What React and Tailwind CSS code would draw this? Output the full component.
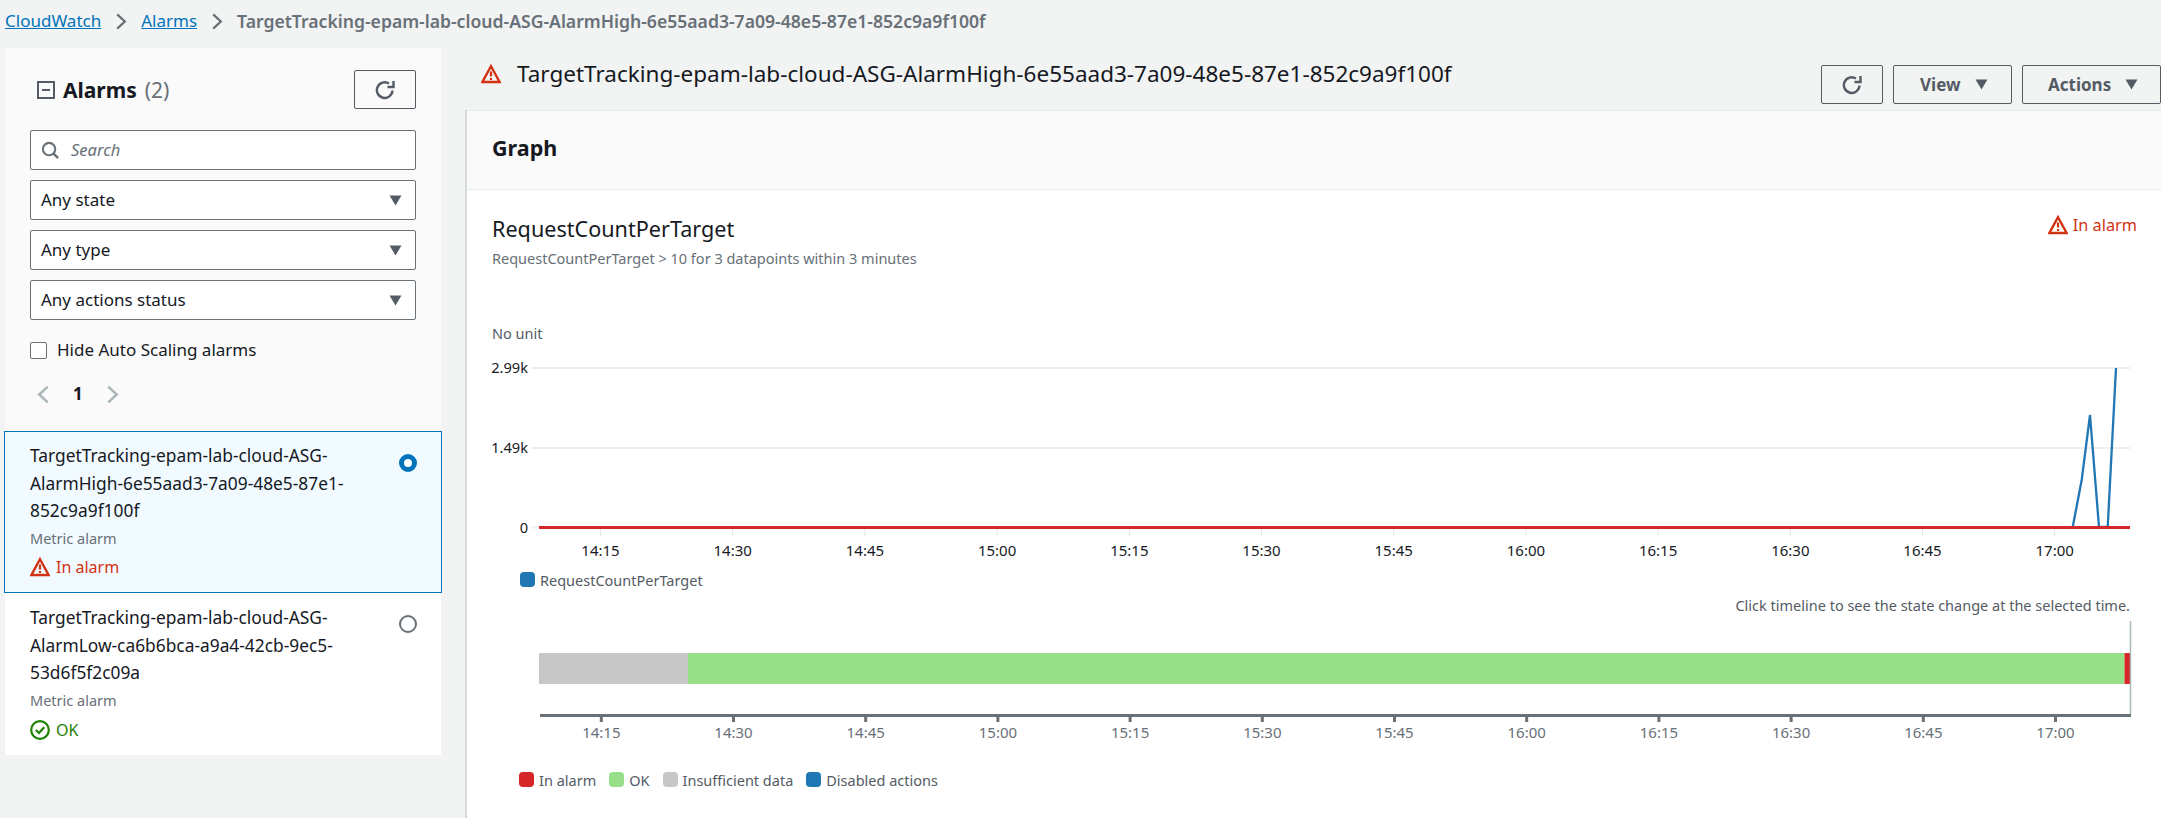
import React from 'react';

const TIMES = ['14:15', '14:30', '14:45', '15:00', '15:15', '15:30', '15:45', '16:00', '16:15', '16:30', '16:45', '17:00'];
const TICK_STEP = 132.2;

const WarnIcon = ({ className }) => (
  <svg viewBox="0 0 20 20" className={className} fill="none">
    <path d="M10 2.2 L18.6 18 H1.4 Z" stroke="#d13212" strokeWidth="2.4" strokeLinejoin="miter" />
    <path d="M10 7.5 V12.5 M10 14 V16" stroke="#d13212" strokeWidth="2.2" />
  </svg>
);

const OkIcon = ({ className }) => (
  <svg viewBox="0 0 20 20" className={className} fill="none">
    <circle cx="10" cy="10" r="8.8" stroke="#1d8102" strokeWidth="2.2" />
    <path d="M5.8 10 L9 13 L14.2 7.2" stroke="#1d8102" strokeWidth="2.2" />
  </svg>
);

const RefreshIcon = () => (
  <svg viewBox="0 0 20 20" className="w-5 h-5" fill="none">
    <path d="M17.5 10.5 A7.8 7.8 0 1 1 14 3.6" stroke="#545b64" strokeWidth="2.4" />
    <path d="M18.5 1 V7 H12.5" stroke="#545b64" strokeWidth="2.4" />
  </svg>
);

const Caret = ({ className }) => (
  <svg viewBox="0 0 14 12" className={className}>
    <path d="M0.5 0.5 H13.5 L7 11.5 Z" fill="#545b64" />
  </svg>
);

const Chevron = ({ dir = 'right', color, className }) => (
  <svg viewBox="0 0 12 18" className={className} fill="none">
    <path d={dir === 'right' ? 'M2 1.5 L10 9 L2 16.5' : 'M10 1.5 L2 9 L10 16.5'} stroke={color} strokeWidth="2.4" />
  </svg>
);

const Dropdown = ({ label }) => (
  <div className="h-10 border border-[#687078] rounded-[2px] bg-white flex items-center justify-between pl-[10px] pr-[13px] text-[17px] text-[#16191f]">
    <span>{label}</span>
    <Caret className="w-[13px] h-[11px]" />
  </div>
);

const AlarmItem = ({ lines, selected, ok }) => (
  <div className={selected
    ? 'h-[162px] -mx-[1px] -mt-[1px] border border-[#0073bb] bg-[#f1faff] pl-[25px] pr-[24px] pt-[10px] flex justify-between'
    : 'h-[162px] bg-white pl-[25px] pr-[24px] pt-[11px] flex justify-between'}
  >
    <div>
      <div className="text-[17.35px] leading-[27.5px] text-[#16191f]">
        {lines.map((l) => <div key={l}>{l}</div>)}
      </div>
      <div className="text-[14.5px] leading-5 mt-[3px] text-[#687078]">Metric alarm</div>
      {ok ? (
        <div className="flex items-center gap-[6px] mt-[10px] text-[16px] leading-5 text-[#1d8102]">
          <OkIcon className="w-5 h-5" />OK
        </div>
      ) : (
        <div className="flex items-center gap-[6px] mt-[9px] text-[16px] leading-5 text-[#d13212]">
          <WarnIcon className="w-5 h-5" />In alarm
        </div>
      )}
    </div>
    {selected ? (
      <div className="w-[18px] h-[18px] rounded-full border-[5px] border-[#0073bb] bg-white mt-[12px]" />
    ) : (
      <div className="w-[18px] h-[18px] rounded-full border-2 border-[#687078] bg-white mt-[11px]" />
    )}
  </div>
);

const Swatch = ({ color, label }) => (
  <div className="flex items-center gap-[5px]">
    <span className="w-[15px] h-[15px] rounded-[4px] -mt-[2px]" style={{ backgroundColor: color }} />
    <span>{label}</span>
  </div>
);

// svg origin is at page x=492
const MetricChart = () => (
  <svg width="1640" height="215" className="block overflow-visible">
    <line x1="40" x2="1638" y1="13" y2="13" stroke="#eeeeee" strokeWidth="2" />
    <line x1="40" x2="1638" y1="93" y2="93" stroke="#eeeeee" strokeWidth="2" />
    <line x1="40" x2="1638" y1="172.5" y2="172.5" stroke="#eeeeee" strokeWidth="2" />
    <g fontFamily="'Noto Sans', sans-serif" fontSize="14.6" fill="#16191f" textAnchor="end">
      <text x="36" y="18">2.99k</text>
      <text x="36" y="98">1.49k</text>
      <text x="36" y="178">0</text>
    </g>
    {TIMES.map((t, i) => (
      <g key={t}>
        <line x1={108.5 + i * TICK_STEP} x2={108.5 + i * TICK_STEP} y1="172" y2="181" stroke="#e5e5e5" />
        <text x={108.5 + i * TICK_STEP} y="201" textAnchor="middle" fontFamily="'Noto Sans', sans-serif" fontSize="15" fill="#16191f">{t}</text>
      </g>
    ))}
    <polyline points="1580.7,172 1589.7,125 1598,60 1607,172 1615.7,172 1624,13" fill="none" stroke="#1f77b4" strokeWidth="2.3" />
    <line x1="47" x2="1638" y1="172.5" y2="172.5" stroke="#d62728" strokeWidth="3" />
  </svg>
);

// same origin, top at page y=620
const Timeline = () => (
  <svg width="1640" height="126" className="block">
    <rect x="47" y="32" width="149" height="31" fill="#c7c7c7" />
    <rect x="196" y="32" width="1436.5" height="31" fill="#98df8a" />
    <rect x="1632.5" y="32" width="5.5" height="31" fill="#d62728" />
    <line x1="1638.5" x2="1638.5" y1="0" y2="94" stroke="#aab7b8" strokeWidth="1.5" />
    <line x1="48" x2="1639" y1="94.5" y2="94.5" stroke="#687078" strokeWidth="3" />
    {TIMES.map((t, i) => (
      <g key={t}>
        <line x1={109.3 + i * TICK_STEP} x2={109.3 + i * TICK_STEP} y1="94" y2="101" stroke="#687078" strokeWidth="3" />
        <text x={109.3 + i * TICK_STEP} y="117" textAnchor="middle" fontFamily="'Noto Sans', sans-serif" fontSize="15" fill="#687078">{t}</text>
      </g>
    ))}
  </svg>
);

const App = () => {
  return (
    <div className="w-[2161px] h-[818px] overflow-hidden bg-[#f2f3f3] font-['Noto_Sans',sans-serif]">
      {/* Breadcrumb */}
      <div className="h-12 flex items-center pl-[5px] pb-[6px] text-[17px]">
        <span className="text-[#0073bb] underline">CloudWatch</span>
        <Chevron color="#687078" className="w-[12px] h-[17px] mx-[14px]" />
        <span className="text-[#0073bb] underline">Alarms</span>
        <Chevron color="#687078" className="w-[12px] h-[17px] mx-[14px]" />
        <span className="font-semibold text-[17.6px] text-[#687078]">TargetTracking-epam-lab-cloud-ASG-AlarmHigh-6e55aad3-7a09-48e5-87e1-852c9a9f100f</span>
      </div>

      <div className="flex">
        {/* Sidebar */}
        <div className="w-[436px] ml-[5px] flex-shrink-0">
          <div className="h-[384px] bg-[#fafafa] pl-[25px] pr-[25px] pt-[22px]">
            <div className="flex justify-between items-start pl-[7px]">
              <div className="flex items-center gap-[8px] mt-[8px]">
                <svg viewBox="0 0 18 18" className="w-[18px] h-[18px]" fill="none">
                  <rect x="1" y="1" width="16" height="16" stroke="#545b64" strokeWidth="2" />
                  <path d="M5 9 H13" stroke="#545b64" strokeWidth="2" />
                </svg>
                <span className="text-[21px] leading-6 font-bold text-[#16191f]">Alarms</span>
                <span className="text-[21px] leading-6 text-[#687078]">(2)</span>
              </div>
              <div className="w-[62px] h-[39px] border border-[#545b64] rounded-[2px] flex items-center justify-center">
                <RefreshIcon />
              </div>
            </div>
            <div className="flex flex-col gap-[10px] mt-[21px]">
              <div className="h-10 border border-[#687078] rounded-[2px] bg-white flex items-center pl-[10px] gap-[11px]">
                <svg viewBox="0 0 20 20" className="w-[19px] h-[19px]" fill="none">
                  <circle cx="8.5" cy="8.5" r="6.5" stroke="#687078" strokeWidth="2.2" />
                  <path d="M13 13 L18 18" stroke="#687078" strokeWidth="2.6" />
                </svg>
                <span className="italic text-[16.5px] text-[#687078]">Search</span>
              </div>
              <Dropdown label="Any state" />
              <Dropdown label="Any type" />
              <Dropdown label="Any actions status" />
            </div>
            <div className="flex items-center gap-[10px] mt-[18px] text-[17px] leading-6 text-[#16191f]">
              <span className="w-[17px] h-[17px] border border-[#687078] rounded-[2px] bg-white" />
              Hide Auto Scaling alarms
            </div>
            <div className="flex items-center mt-[20px] pl-[7px] text-[#16191f]">
              <Chevron dir="left" color="#aab7b8" className="w-[13px] h-[19px]" />
              <span className="text-[17px] font-bold leading-6 ml-[23px] mr-[23px]">1</span>
              <Chevron color="#aab7b8" className="w-[13px] h-[19px]" />
            </div>
          </div>
          <AlarmItem selected lines={['TargetTracking-epam-lab-cloud-ASG-', 'AlarmHigh-6e55aad3-7a09-48e5-87e1-', '852c9a9f100f']} />
          <AlarmItem ok lines={['TargetTracking-epam-lab-cloud-ASG-', 'AlarmLow-ca6b6bca-a9a4-42cb-9ec5-', '53d6f5f2c09a']} />
        </div>

        {/* Main */}
        <div className="ml-[24px] flex-1 min-w-0">
          <div className="h-[62px] flex justify-between">
            <div className="flex items-start pl-[16px] pt-[13px] gap-[16px]">
              <WarnIcon className="w-5 h-5 mt-[3px]" />
              <span className="text-[22.5px] leading-[26px] text-[#16191f] whitespace-nowrap">TargetTracking-epam-lab-cloud-ASG-AlarmHigh-6e55aad3-7a09-48e5-87e1-852c9a9f100f</span>
            </div>
            <div className="flex gap-[10px] mt-[17px] h-[39px] flex-shrink-0 w-[340px]">
              <div className="w-[62px] border border-[#545b64] rounded-[2px] flex items-center justify-center flex-shrink-0">
                <RefreshIcon />
              </div>
              <div className="w-[119px] border border-[#545b64] rounded-[2px] flex items-center pl-[26px] gap-[14px] text-[17px] font-bold text-[#545b64] flex-shrink-0">
                View <Caret className="w-[13px] h-[11px]" />
              </div>
              <div className="w-[139px] border border-[#545b64] rounded-[2px] flex items-center pl-[25px] gap-[14px] text-[17px] font-bold text-[#545b64] flex-shrink-0">
                Actions <Caret className="w-[13px] h-[11px]" />
              </div>
            </div>
          </div>

          <div className="h-[708px] bg-white border-l-2 border-[#d5dbdb]">
            <div className="h-[80px] bg-[#fafafa] border-b border-t border-[#eaeded] pl-[25px] pb-[3px] flex items-center">
              <span className="text-[21.5px] font-bold text-[#16191f]">Graph</span>
            </div>
            <div className="pl-[25px] pt-[25px]">
              <div className="flex justify-between pr-[24px]">
                <div>
                  <div className="text-[21.6px] leading-7 text-[#16191f]">RequestCountPerTarget</div>
                  <div className="text-[14.5px] leading-5 mt-[5px] text-[#687078]">RequestCountPerTarget &gt; 10 for 3 datapoints within 3 minutes</div>
                </div>
                <div className="flex items-center gap-[5px] self-start -ml-[2px] text-[16.3px] leading-5 text-[#d13212]">
                  <WarnIcon className="w-5 h-5" />In alarm
                </div>
              </div>
              <div className="text-[14.5px] leading-5 mt-[55px] text-[#545b64]">No unit</div>
              <div className="mt-[12px]">
                <MetricChart />
              </div>
              <div className="flex pl-[28px] text-[14.5px] leading-5 text-[#545b64]">
                <Swatch color="#1f77b4" label="RequestCountPerTarget" />
              </div>
              <div className="w-[1638px] text-right text-[14.5px] leading-5 text-[#545b64] mt-[5px]">
                Click timeline to see the state change at the selected time.
              </div>
              <div className="mt-[6px]">
                <Timeline />
              </div>
              <div className="flex pl-[27px] gap-[13px] text-[14.5px] leading-5 text-[#545b64] mt-[23px]">
                <Swatch color="#d62728" label="In alarm" />
                <Swatch color="#98df8a" label="OK" />
                <Swatch color="#c7c7c7" label="Insufficient data" />
                <Swatch color="#1f77b4" label="Disabled actions" />
              </div>
            </div>
          </div>
        </div>
      </div>
    </div>
  );
};

export default App;
